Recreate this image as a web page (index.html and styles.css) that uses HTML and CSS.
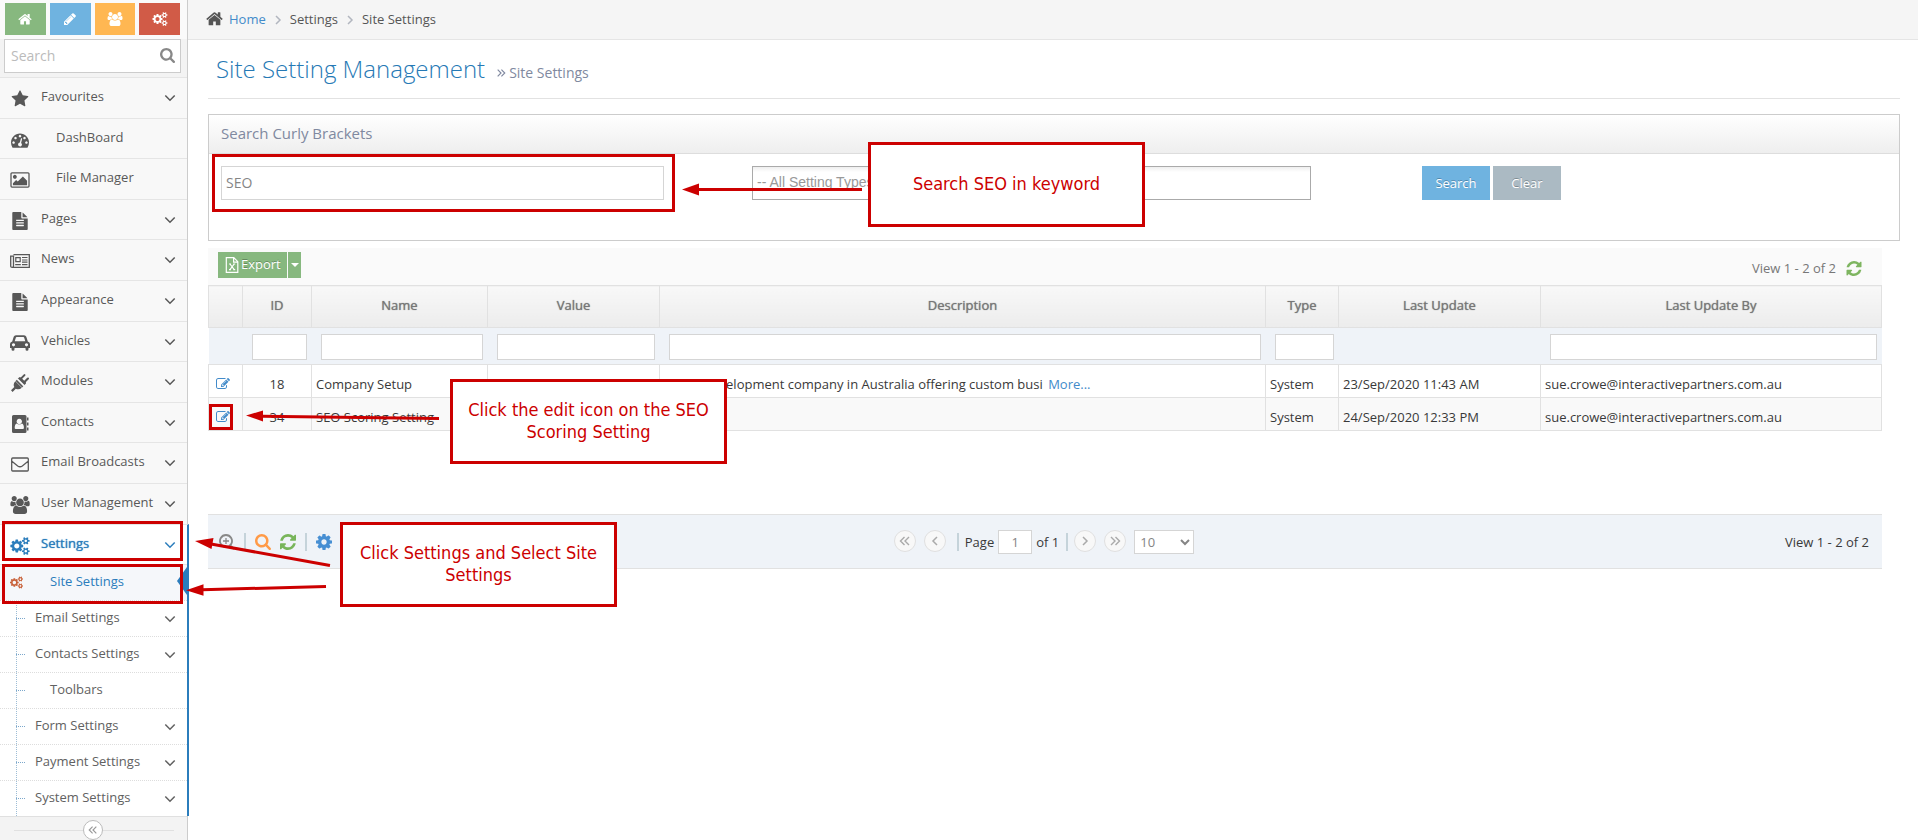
FILE: index.html
```html
<!DOCTYPE html>
<html lang="en">
<head>
    <meta charset="UTF-8">
    <meta name="viewport" content="width=device-width, initial-scale=1.0">
    <title>Site Setting Management</title>
    <link rel="stylesheet" href="styles.css">
</head>
<body>

    <!-- Icon set -->
    <svg class="sprite" aria-hidden="true">
        <symbol id="i-home" viewBox="64 128 1664 1472"><path d="M1472 992v480q0 26-19 45t-45 19h-384v-384h-256v384h-384q-26 0-45-19t-19-45v-480q0-1 .5-3t.5-3l575-474 575 474q1 2 1 6zm223-69l-62 74q-8 9-21 11h-3q-13 0-21-7l-692-577-692 577q-12 8-24 7-13-2-21-11l-62-74q-8-10-7-23.5t11-21.5l719-599q32-26 76-26t76 26l244 204v-195q0-14 9-23t23-9h192q14 0 23 9t9 23v408l219 182q10 8 11 21.5t-7 23.5z"/></symbol>
        <symbol id="i-pencil" viewBox="0 0 1792 1792"><path d="M491 1536l91-91-235-235-91 91v107h128v128h107zm523-928q0-22-22-22-10 0-17 7l-542 542q-7 7-7 17 0 22 22 22 10 0 17-7l542-542q7-7 7-17zm-54-192l416 416-832 832h-416v-416zm683 96q0 53-37 90l-166 166-416-416 166-165q36-38 90-38 53 0 91 38l235 234q37 39 37 91z"/></symbol>
        <symbol id="i-users" viewBox="64 0 1920 1792"><path d="M657 896q-162 5-265 128h-134q-82 0-138-40.5t-56-118.5q0-353 124-353 6 0 43.5 21t97.5 42.5 119 21.5q67 0 133-23-5 37-5 66 0 159 90 293zm1071 637q0 120-73 189.5t-194 69.5h-874q-121 0-194-69.5t-73-189.5q0-53 3.5-103.5t14-109 26.5-108.5 43-97.5 62-81 85.5-53.5 111.5-20q10 0 43 21.5t73 48 107 48 135 21.5 135-21.5 107-48 73-48 43-21.5q61 0 111.5 20t85.5 53.5 62 81 43 97.5 26.5 108.5 14 109 3.5 103.5zm-1024-1277q0 106-75 181t-181 75-181-75-75-181 75-181 181-75 181 75 75 181zm704 384q0 159-112.5 271.5t-271.5 112.5-271.5-112.5-112.5-271.5 112.5-271.5 271.5-112.5 271.5 112.5 112.5 271.5zm576 225q0 78-56 118.5t-138 40.5h-134q-103-123-265-128 90-134 90-293 0-29-5-66 66 23 133 23 59 0 119-21.5t97.5-42.5 43.5-21q124 0 124 353zm-128-609q0 106-75 181t-181 75-181-75-75-181 75-181 181-75 181 75 75 181z"/></symbol>
        <symbol id="i-cogs" viewBox="-64 0 1920 1792"><path d="M832 896q0-106-75-181t-181-75-181 75-75 181 75 181 181 75 181-75 75-181zm768 512q0-52-38-90t-90-38-90 38-38 90q0 53 37.5 90.5t90.5 37.5 90.5-37.5 37.5-90.5zm0-1024q0-52-38-90t-90-38-90 38-38 90q0 53 37.5 90.5t90.5 37.5 90.5-37.5 37.5-90.5zm-384 421v185q0 10-7 19.5t-16 10.5l-155 24q-11 35-32 76 34 48 90 115 7 11 7 20 0 12-7 19-23 30-82.5 89.5t-78.5 59.5q-11 0-21-7l-115-90q-37 19-77 31-11 108-23 155-7 24-30 24h-186q-11 0-20-7.5t-10-17.5l-23-153q-34-10-75-31l-118 89q-7 7-20 7-11 0-21-8-144-133-144-160 0-9 7-19 10-14 41-53t47-61q-23-44-35-82l-152-24q-10-1-17-9.5t-7-19.5v-185q0-10 7-19.5t16-10.5l155-24q11-35 32-76-34-48-90-115-7-11-7-20 0-12 7-20 22-30 82-89t79-59q11 0 21 7l115 90q34-18 77-32 11-108 23-154 7-24 30-24h186q11 0 20 7.5t10 17.5l23 153q34 10 75 31l118-89q8-7 20-7 11 0 21 8 144 133 144 160 0 8-7 19-12 16-42 54t-45 60q23 48 34 82l152 23q10 2 17 10.5t7 19.5zm640 533v140q0 16-149 31-12 27-30 52 51 113 51 138 0 4-4 7-122 71-124 71-8 0-46-47t-52-68q-20 2-30 2t-30-2q-14 21-52 68t-46 47q-2 0-124-71-4-3-4-7 0-25 51-138-18-25-30-52-149-15-149-31v-140q0-16 149-31 13-29 30-52-51-113-51-138 0-4 4-7 4-2 35-20t59-34 30-16q8 0 46 46.5t52 67.5q20-2 30-2t30 2q51-71 92-112l6-2q4 0 124 70 4 3 4 7 0 25-51 138 17 23 30 52 149 15 149 31zm0-1024v140q0 16-149 31-12 27-30 52 51 113 51 138 0 4-4 7-122 71-124 71-8 0-46-47t-52-68q-20 2-30 2t-30-2q-14 21-52 68t-46 47q-2 0-124-71-4-3-4-7 0-25 51-138-18-25-30-52-149-15-149-31v-140q0-16 149-31 13-29 30-52-51-113-51-138 0-4 4-7 4-2 35-20t59-34 30-16q8 0 46 46.5t52 67.5q20-2 30-2t30 2q51-71 92-112l6-2q4 0 124 70 4 3 4 7 0 25-51 138 17 23 30 52 149 15 149 31z"/></symbol>
        <symbol id="i-search" viewBox="64 128 1664 1664"><path d="M1216 832q0-185-131.5-316.5t-316.5-131.5-316.5 131.5-131.5 316.5 131.5 316.5 316.5 131.5 316.5-131.5 131.5-316.5zm512 832q0 52-38 90t-90 38q-54 0-90-38l-343-342q-179 124-399 124-143 0-273.5-55.5t-225-150-150-225-55.5-273.5 55.5-273.5 150-225 225-150 273.5-55.5 273.5 55.5 225 150 150 225 55.5 273.5q0 220-124 399l343 343q37 37 37 90z"/></symbol>
        <symbol id="i-star" viewBox="0 0 1792 1792"><path d="M1728 647q0 22-26 48l-363 354 86 500q1 7 1 20 0 21-10.5 35.5t-30.5 14.5q-19 0-40-12l-449-236-449 236q-22 12-40 12-21 0-31.5-14.5t-10.5-35.5q0-6 2-20l86-500-364-354q-25-27-25-48 0-37 56-46l502-73 225-455q19-41 49-41t49 41l225 455 502 73q56 9 56 46z"/></symbol>
        <symbol id="i-dashboard" viewBox="0 0 1792 1792"><path d="M384 1152q0-53-37.5-90.5t-90.5-37.5-90.5 37.5-37.5 90.5 37.5 90.5 90.5 37.5 90.5-37.5 37.5-90.5zm192-448q0-53-37.5-90.5t-90.5-37.5-90.5 37.5-37.5 90.5 37.5 90.5 90.5 37.5 90.5-37.5 37.5-90.5zm428 481l101-382q6-26-7.5-48.5t-38.5-29.5-48 6.5-30 39.5l-101 382q-60 5-107 43.5t-63 98.5q-20 77 20 146t117 89 146-20 89-117q16-60-6-117t-72-91zm660-33q0-53-37.5-90.5t-90.5-37.5-90.5 37.5-37.5 90.5 37.5 90.5 90.5 37.5 90.5-37.5 37.5-90.5zm-640-640q0-53-37.5-90.5t-90.5-37.5-90.5 37.5-37.5 90.5 37.5 90.5 90.5 37.5 90.5-37.5 37.5-90.5zm448 192q0-53-37.5-90.5t-90.5-37.5-90.5 37.5-37.5 90.5 37.5 90.5 90.5 37.5 90.5-37.5 37.5-90.5zm320 448q0 261-141 483-19 29-54 29h-1402q-35 0-54-29-141-221-141-483 0-182 71-348t191-286 286-191 348-71 348 71 286 191 191 286 71 348z"/></symbol>
        <symbol id="i-picture" viewBox="-64 0 1920 1792"><path d="M576 576q0 80-56 136t-136 56-136-56-56-136 56-136 136-56 136 56 56 136zm1024 384v448h-1408v-192l320-320 160 160 512-512zm96-704h-1600q-13 0-22.5 9.5t-9.5 22.5v1216q0 13 9.5 22.5t22.5 9.5h1600q13 0 22.5-9.5t9.5-22.5v-1216q0-13-9.5-22.5t-22.5-9.5zm160 32v1216q0 66-47 113t-113 47h-1600q-66 0-113-47t-47-113v-1216q0-66 47-113t113-47h1600q66 0 113 47t47 113z"/></symbol>
        <symbol id="i-file" viewBox="0 0 1792 1792"><path d="M1596 476q14 14 28 36h-472v-472q22 14 36 28zm-476 164h544v1056q0 40-28 68t-68 28h-1344q-40 0-68-28t-28-68v-1600q0-40 28-68t68-28h800v544q0 40 28 68t68 28zm160 736v-64q0-14-9-23t-23-9h-704q-14 0-23 9t-9 23v64q0 14 9 23t23 9h704q14 0 23-9t9-23zm0-256v-64q0-14-9-23t-23-9h-704q-14 0-23 9t-9 23v64q0 14 9 23t23 9h704q14 0 23-9t9-23zm0-256v-64q0-14-9-23t-23-9h-704q-14 0-23 9t-9 23v64q0 14 9 23t23 9h704q14 0 23-9t9-23z"/></symbol>
        <symbol id="i-news" viewBox="0 0 20 18"><path fill="none" stroke="currentColor" stroke-width="1.3" d="M3.5 2.7h15.8v12.6H2.2Q.7 15.3.7 14V4.2h2.8V14q0 1.2-1.2 1.3"/><path fill="none" stroke="currentColor" stroke-width="1.2" d="M5.8 5.6h4.4v4H5.8zM12 5.5h5.5M12 8h5.5M12 10.2h5.5M5.2 12.7h5.6M12 12.7h5.5"/></symbol>
        <symbol id="i-car" viewBox="0 0 20 18"><path fill-rule="evenodd" d="M2.2 7.4 3.7 2.8Q4.2 1.2 6 1.2h8q1.800 0 2.300 1.600l1.500 4.600Q20 8 20 10v4h-1.500v1.300q0 1.500-1.500 1.500t-1.500-1.500V14h-11v1.300q0 1.500-1.500 1.500t-1.500-1.500V14H0v-4Q0 8 2.200 7.400zM4.700 7.200h10.600l-1.200-3.700q-.1-.4-.6-.4h-7q-.5 0-.6.4zM3.500 9.200a1.600 1.600 0 1 0 .01 0zM16.500 9.200a1.600 1.600 0 1 0 .01 0z"/></symbol>
        <symbol id="i-plug" viewBox="0 0 18 18"><path d="M4.300 7.200 10.800 13.700Q8 16.300 4.800 14.700L1.600 17.900 0 16.300 3.300 13.100Q1.700 10 4.300 7.200zM5.800 5.800 12.200 12.200 14.500 9.900Q15.500 9 14.700 8.200L17.700 5.200Q18.300 4.300 17.700 3.800T16.200 3.800L13.200 6.800 11.200 4.800 14.200 1.800Q14.800 1 14.200.4T12.700.4L9.700 3.400Q8.800 2.700 8 3.500zM4.600 6.900 7 4.500l6.500 6.500-2.400 2.400z"/></symbol>
        <symbol id="i-contacts" viewBox="0 0 18 18"><path fill-rule="evenodd" d="M2.500 0h11.500q1.500 0 1.500 1.500v15q0 1.500-1.500 1.500h-11.500Q1 18 1 16.500v-15Q1 0 2.500 0zM8.300 3.800a2.700 2.700 0 1 0 .01 0zM5.700 8.500Q3.700 9 3.700 13q0 1 1 1h7.200q1 0 1-1 0-4-2-4.500-2.600 1.800-5.200 0z"/><path d="M16 2.500h1.500v3H16zM16 7.500h1.500v3H16zM16 12.500h1.500v3H16z"/></symbol>
        <symbol id="i-mail" viewBox="0 0 18 18"><path fill="none" stroke="currentColor" stroke-width="1.300" d="M1.700 3h14.600q1 0 1 1v11q0 1-1 1H1.700q-1 0-1-1V4q0-1 1-1zM.9 6.200l5.800 4.700q2.300 1.700 4.600 0l5.800-4.700"/></symbol>
        <symbol id="i-down" viewBox="0 0 12 12"><path fill="none" stroke="currentColor" stroke-width="1.500" d="M1.300 3.500 6 8.200l4.700-4.700"/></symbol>
        <symbol id="i-right" viewBox="0 0 12 12"><path fill="none" stroke="currentColor" stroke-width="1.500" d="M4 2l4 4-4 4"/></symbol>
        <symbol id="i-left" viewBox="0 0 12 12"><path fill="none" stroke="currentColor" stroke-width="1.500" d="M8 2 4 6l4 4"/></symbol>
        <symbol id="i-dright" viewBox="0 0 12 12"><path fill="none" stroke="currentColor" stroke-width="1.400" d="M2 2l4 4-4 4M6.500 2l4 4-4 4"/></symbol>
        <symbol id="i-dleft" viewBox="0 0 12 12"><path fill="none" stroke="currentColor" stroke-width="1.400" d="M10 2 6 6l4 4M5.500 2l-4 4 4 4"/></symbol>
        <symbol id="i-edit" viewBox="0 0 1792 1792"><path d="M888 1184l116-116-152-152-116 116v56h96v96h56zm440-720q-16-16-33 1l-350 350q-17 17-1 33t33-1l350-350q17-17 1-33zm80 594v190q0 119-84.5 203.5t-203.5 84.5h-832q-119 0-203.5-84.5t-84.5-203.5v-832q0-119 84.500-203.500t203.500-84.500h832q63 0 117 25 15 7 18 23 3 17-9 29l-49 49q-14 14-32 8-23-6-45-6h-832q-66 0-113 47t-47 113v832q0 66 47 113t113 47h832q66 0 113-47t47-113v-126q0-13 9-22l64-64q15-15 35-7t20 29zm-96-738l288 288-672 672h-288v-288zm444 132l-92 92-288-288 92-92q28-28 68-28t68 28l152 152q28 28 28 68t-28 68z"/></symbol>
        <symbol id="i-excel" viewBox="0 0 14 16"><path fill="none" stroke="currentColor" stroke-width="1.200" d="M1.300.7h7.500l4 4v10.600H1.300zM8.600.9v4.200h4.100M4 7h2M8.200 7h2M4 12.700h2M8.200 12.700h2M5 7l4.200 5.700M9.200 7 5 12.700"/></symbol>
        <symbol id="i-refresh" viewBox="128 128 1536 1536"><path d="M1639 1056q0 5-1 7-64 268-268 434.5t-478 166.5q-146 0-282.500-55t-243.500-157l-129 129q-19 19-45 19t-45-19-19-45v-448q0-26 19-45t45-19h448q26 0 45 19t19 45-19 45l-137 137q71 66 161 102t187 36q134 0 250-65t186-179q11-17 53-117 8-23 30-23h192q13 0 22.500 9.500t9.500 22.500zm25-800v448q0 26-19 45t-45 19h-448q-26 0-45-19t-19-45 19-45l138-138q-148-137-349-137-134 0-250 65t-186 179q-11 17-53 117-8 23-30 23h-199q-13 0-22.500-9.500t-9.500-22.500v-7q65-268 270-434.500t480-166.500q146 0 284 55.500t245 156.500l130-129q19-19 45-19t45 19 19 45z"/></symbol>
        <symbol id="i-cog" viewBox="128 128 1536 1536"><path d="M1152 896q0-106-75-181t-181-75-181 75-75 181 75 181 181 75 181-75 75-181zm512-109v222q0 12-8 23t-20 13l-185 28q-19 54-39 91 35 50 107 138 10 12 10 25t-9 23q-27 37-99 108t-94 71q-12 0-26-9l-138-108q-44 23-91 38-16 136-29 186-7 28-36 28h-222q-14 0-24.500-8.500t-11.500-21.500l-28-184q-49-16-90-37l-141 107q-10 9-25 9-14 0-25-11-126-114-165-168-7-10-7-23 0-12 8-23 15-21 51-66.500t54-70.500q-27-50-41-99l-183-27q-13-2-21-12.500t-8-23.500v-222q0-12 8-23t19-13l186-28q14-46 39-92-40-57-107-138-10-12-10-24 0-10 9-23 26-36 98.500-107.500t94.500-71.500q13 0 26 10l138 107q44-23 91-38 16-136 29-186 7-28 36-28h222q14 0 24.500 8.500t11.500 21.500l28 184q49 16 90 37l142-107q9-9 24-9 13 0 25 10 129 119 165 170 7 8 7 22 0 12-8 23-15 21-51 66.500t-54 70.500q26 50 41 98l183 28q13 2 21 12.500t8 23.500z"/></symbol>
        <symbol id="i-zoom" viewBox="0 0 16 16"><path fill="none" stroke="currentColor" stroke-width="1.800" d="M7 1a6 6 0 1 1-.01 0zM11.500 11.500 15 15"/><path fill="none" stroke="currentColor" stroke-width="1.300" d="M7 4v6M4 7h6"/></symbol>
    </svg>

    <aside class="sidebar">
        <div class="shortcuts">
            <button class="shortcut green" aria-label="Home"><svg class="icon"><use href="#i-home"/></svg></button>
            <button class="shortcut blue" aria-label="Edit"><svg class="icon"><use href="#i-pencil"/></svg></button>
            <button class="shortcut orange" aria-label="Users"><svg class="icon"><use href="#i-users"/></svg></button>
            <button class="shortcut red" aria-label="Settings"><svg class="icon"><use href="#i-cogs"/></svg></button>
        </div>
        <form class="nav-search">
            <input type="text" placeholder="Search" aria-label="Search menu">
            <svg class="search-icon"><use href="#i-search"/></svg>
        </form>

        <ul class="nav">
            <li><a href="#"><svg class="nav-icon"><use href="#i-star"/></svg><span>Favourites</span><svg class="arrow"><use href="#i-down"/></svg></a></li>
            <li><a href="#"><svg class="nav-icon"><use href="#i-dashboard"/></svg><span class="leaf">DashBoard</span></a></li>
            <li><a href="#"><svg class="nav-icon"><use href="#i-picture"/></svg><span class="leaf">File Manager</span></a></li>
            <li><a href="#"><svg class="nav-icon"><use href="#i-file"/></svg><span>Pages</span><svg class="arrow"><use href="#i-down"/></svg></a></li>
            <li><a href="#"><svg class="nav-icon"><use href="#i-news"/></svg><span>News</span><svg class="arrow"><use href="#i-down"/></svg></a></li>
            <li><a href="#"><svg class="nav-icon"><use href="#i-file"/></svg><span>Appearance</span><svg class="arrow"><use href="#i-down"/></svg></a></li>
            <li><a href="#"><svg class="nav-icon"><use href="#i-car"/></svg><span>Vehicles</span><svg class="arrow"><use href="#i-down"/></svg></a></li>
            <li><a href="#"><svg class="nav-icon"><use href="#i-plug"/></svg><span>Modules</span><svg class="arrow"><use href="#i-down"/></svg></a></li>
            <li><a href="#"><svg class="nav-icon"><use href="#i-contacts"/></svg><span>Contacts</span><svg class="arrow"><use href="#i-down"/></svg></a></li>
            <li><a href="#"><svg class="nav-icon"><use href="#i-mail"/></svg><span>Email Broadcasts</span><svg class="arrow"><use href="#i-down"/></svg></a></li>
            <li><a href="#"><svg class="nav-icon"><use href="#i-users"/></svg><span>User Management</span><svg class="arrow"><use href="#i-down"/></svg></a></li>
            <li class="open"><a href="#"><svg class="nav-icon"><use href="#i-cogs"/></svg><span>Settings</span><svg class="arrow"><use href="#i-down"/></svg></a>
                <ul class="submenu">
                    <li class="active"><a href="#"><svg class="sub-icon"><use href="#i-cogs"/></svg><span class="leaf">Site Settings</span></a></li>
                    <li><a href="#"><span>Email Settings</span><svg class="arrow"><use href="#i-down"/></svg></a></li>
                    <li><a href="#"><span>Contacts Settings</span><svg class="arrow"><use href="#i-down"/></svg></a></li>
                    <li><a href="#"><span class="leaf">Toolbars</span></a></li>
                    <li><a href="#"><span>Form Settings</span><svg class="arrow"><use href="#i-down"/></svg></a></li>
                    <li><a href="#"><span>Payment Settings</span><svg class="arrow"><use href="#i-down"/></svg></a></li>
                    <li><a href="#"><span>System Settings</span><svg class="arrow"><use href="#i-down"/></svg></a></li>
                </ul>
            </li>
        </ul>

        <div class="collapse">
            <button aria-label="Collapse menu"><svg><use href="#i-dleft"/></svg></button>
        </div>
    </aside>

    <main class="main">
        <nav class="breadcrumb">
            <svg class="home-icon"><use href="#i-home"/></svg>
            <a href="#">Home</a>
            <svg class="sep"><use href="#i-right"/></svg>
            <span>Settings</span>
            <svg class="sep"><use href="#i-right"/></svg>
            <span>Site Settings</span>
        </nav>

        <div class="content">
            <header class="page-header">
                <h1>Site Setting Management</h1>
                <small><svg><use href="#i-dright"/></svg>Site Settings</small>
            </header>

            <section class="panel">
                <h2>Search Curly Brackets</h2>
                <form class="filters">
                    <div><input type="text" value="SEO" aria-label="Keyword"></div>
                    <div><select aria-label="Setting type"><option>-- All Setting Types --</option></select></div>
                    <div class="filter-buttons">
                        <button type="button" class="btn-search">Search</button>
                        <button type="button" class="btn-clear">Clear</button>
                    </div>
                </form>
            </section>

            <section class="grid">
                <div class="grid-top">
                    <div class="export">
                        <button class="export-main"><svg><use href="#i-excel"/></svg>Export</button>
                        <button class="export-caret" aria-label="Export options"></button>
                    </div>
                    <div class="grid-view">View 1 - 2 of 2 <svg class="green-icon"><use href="#i-refresh"/></svg></div>
                </div>

                <table>
                    <colgroup>
                        <col class="c-edit"><col class="c-id"><col class="c-name"><col class="c-value"><col>
                        <col class="c-type"><col class="c-date"><col class="c-by">
                    </colgroup>
                    <thead>
                        <tr>
                            <th></th><th>ID</th><th>Name</th><th>Value</th><th>Description</th><th>Type</th><th>Last Update</th><th>Last Update By</th>
                        </tr>
                        <tr class="filter-row">
                            <td></td>
                            <td><input type="text" aria-label="Filter ID"></td>
                            <td><input type="text" aria-label="Filter name"></td>
                            <td><input type="text" aria-label="Filter value"></td>
                            <td><input type="text" aria-label="Filter description"></td>
                            <td><input type="text" aria-label="Filter type"></td>
                            <td></td>
                            <td><input type="text" aria-label="Filter last update by"></td>
                        </tr>
                    </thead>
                    <tbody>
                        <tr>
                            <td class="edit"><a href="#" aria-label="Edit 18"><svg><use href="#i-edit"/></svg></a></td>
                            <td class="id">18</td><td>Company Setup</td><td></td>
                            <td>A web development company in Australia offering custom busi <a class="more" href="#">More...</a></td>
                            <td>System</td><td>23/Sep/2020 11:43 AM</td><td>sue.crowe@interactivepartners.com.au</td>
                        </tr>
                        <tr>
                            <td class="edit"><a href="#" aria-label="Edit 34"><svg><use href="#i-edit"/></svg></a></td>
                            <td class="id">34</td><td>SEO Scoring Setting</td><td></td><td></td>
                            <td>System</td><td>24/Sep/2020 12:33 PM</td><td>sue.crowe@interactivepartners.com.au</td>
                        </tr>
                    </tbody>
                </table>

                <div class="grid-footer">
                    <div class="tools">
                        <button class="grey" aria-label="View"><svg><use href="#i-zoom"/></svg></button>
                        <i class="bar"></i>
                        <button class="amber" aria-label="Find"><svg><use href="#i-search"/></svg></button>
                        <button class="leafy" aria-label="Reload"><svg><use href="#i-refresh"/></svg></button>
                        <i class="bar"></i>
                        <button class="sky" aria-label="Columns"><svg><use href="#i-cog"/></svg></button>
                    </div>
                    <div class="pager">
                        <button aria-label="First page"><svg><use href="#i-dleft"/></svg></button>
                        <button aria-label="Previous page"><svg><use href="#i-left"/></svg></button>
                        <i class="bar"></i>
                        <label for="page">Page</label>
                        <input id="page" type="text" value="1">
                        <span>of 1</span>
                        <i class="bar"></i>
                        <button aria-label="Next page"><svg><use href="#i-right"/></svg></button>
                        <button aria-label="Last page"><svg><use href="#i-dright"/></svg></button>
                        <select aria-label="Rows per page"><option>10</option><option>20</option><option>30</option></select>
                    </div>
                    <div class="footer-view">View 1 - 2 of 2</div>
                </div>
            </section>
        </div>
    </main>

    <!-- Guide notes over the page -->
    <div class="guide">
        <svg class="arrows">
            <g>
                <path class="shaft" d="M862 189.500H698"/><path d="M682 189.500l17-6v12z"/>
                <path class="shaft" d="M439 418.500 262 416.200"/><path d="M246 415.500l17-5v11z"/>
                <path class="shaft" d="M330 565.500 211 544"/><path d="M195 541l18.500-3-2 11z"/>
                <path class="shaft" d="M326 586.500 202 589.800"/><path d="M186 590.300l17.500-6v11.500z"/>
            </g>
        </svg>
        <div class="mark mark-keyword"></div>
        <div class="mark mark-edit"></div>
        <div class="mark mark-settings"></div>
        <div class="mark mark-site"></div>
        <div class="note note-keyword">Search SEO in keyword</div>
        <div class="note note-edit">Click the edit icon on the SEO Scoring Setting</div>
        <div class="note note-settings">Click Settings and Select Site Settings</div>
    </div>

</body>
</html>
```
FILE: styles.css
```css
* { margin: 0; padding: 0; box-sizing: border-box; }

body {
    font-family: "Open Sans", sans-serif;
    font-size: 13px;
    line-height: 20px;
    color: #393939;
    background: #fff;
    min-height: 100vh;
    display: flex;
    position: relative;
}

a { color: #428bca; text-decoration: none; }
ul { list-style: none; }
button, input, select { font-family: inherit; font-size: 13px; border-radius: 0; }
button { border: none; cursor: pointer; }
svg { fill: currentColor; flex: none; }
.sprite { position: absolute; width: 0; height: 0; }

/* Sidebar */
.sidebar {
    width: 188px;
    flex: none;
    background: #f3f3f3;
    border-right: 1px solid #ccc;
}

.shortcuts {
    display: flex;
    gap: 4px;
    padding: 3px 7px 4px 5px;
    background: #fafafa;
}

.shortcut {
    flex: 1;
    height: 32px;
    color: #fff;
    display: flex;
    align-items: center;
    justify-content: center;
}

.shortcut .icon { width: 16px; height: 14px; }
.shortcut.green .icon { height: 12px; }
.green { background: #87b87f; }
.blue { background: #6fb3e0; }
.orange { background: #ffb752; }
.red { background: #d15b47; }

.nav-search {
    display: flex;
    align-items: center;
    margin: 0 6px 4px 4px;
    border: 1px solid #ccc;
    background: #fff;
    height: 34px;
    padding: 0 5px 2px 0;
}

.nav-search input {
    flex: 1;
    min-width: 0;
    border: none;
    padding: 0 6px;
    font-size: 14px;
    background: none;
}

.nav-search input::placeholder { color: #bbb; }
.search-icon { width: 15px; height: 15px; color: #888; }

.nav > li { border-top: 1px solid #e5e5e5; background: #f8f8f8; }

.nav > li > a {
    display: flex;
    align-items: center;
    height: 40px;
    padding: 0 10px;
    color: #585858;
}

.nav > li:nth-child(5n+2) > a, .nav > li:nth-child(5n+4) > a { height: 39px; }

.nav-icon { width: 20px; height: 18px; margin-right: 11px; margin-top: 2px; }
.nav span { flex: 1; padding-bottom: 4px; white-space: nowrap; }
.nav > li > a > .leaf { padding-left: 15px; }
.arrow { width: 12px; height: 12px; margin-right: 1px; }

.nav > .open { background: #fff; margin-right: -2px; border-right: 2px solid #2b7dbc; }
.nav > .open > a { color: #2b7dbc; text-shadow: 0 0 1px #2b7dbc; }

.submenu {
    border-top: 1px solid #e5e5e5;
    background: linear-gradient(#9dbdd6 50%, transparent 50%) 16px 0 / 1px 2px repeat-y;
    text-shadow: none;
}

.submenu li + li { border-top: 1px dotted #ddd; }

.submenu li a {
    display: flex;
    align-items: center;
    height: 35px;
    padding: 0 10px 0 16px;
    color: #616161;
}

.submenu li a::before {
    content: "";
    width: 9px;
    margin-right: 10px;
    border-top: 1px dotted #7ba7cb;
}

.submenu .leaf { padding-left: 15px; }

.submenu .active { position: relative; }
.submenu .active a { color: #2b7dbc; background: #f5f7fa; padding-left: 10px; }
.submenu .active a::before { display: none; }
.sub-icon { width: 13px; height: 13px; margin-right: 12px; color: #c86139; }

.submenu .active::after {
    content: "";
    position: absolute;
    right: 0;
    top: 2px;
    border: 14px solid transparent;
    border-width: 14px 10px;
    border-right-color: #2b7dbc;
    border-left: none;
}

.collapse {
    border-top: 1px solid #e0e0e0;
    padding: 3px 2px 3px 0;
    text-align: center;
    background: linear-gradient(#e0e0e0, #e0e0e0) center 13px / 160px 1px no-repeat;
}

.collapse button {
    width: 20px;
    height: 20px;
    border: 1px solid #bbb;
    border-radius: 50%;
    background: #fff;
    color: #999;
}

.collapse svg { width: 10px; height: 12px; display: block; margin: auto; }

/* Main area */
.main { flex: 1; min-width: 0; }

.breadcrumb {
    display: flex;
    align-items: center;
    height: 40px;
    padding: 0 18px 2px;
    background: #f5f5f5;
    border-bottom: 1px solid #e5e5e5;
    color: #555;
}

.home-icon { width: 17px; height: 15px; margin-right: 6px; }
.breadcrumb .sep { width: 14px; height: 12px; margin: 2px 5px 0; color: #b2b6bf; }

.content { padding: 0 18px 0 20px; }

.page-header {
    display: flex;
    align-items: baseline;
    gap: 11px;
    padding: 12px 8px 12px;
    border-bottom: 1px solid #e2e2e2;
}

.page-header h1 {
    font-size: 24px;
    line-height: 34px;
    font-weight: 300;
    color: #2679b5;
}

.page-header small { font-size: 14px; color: #8089a0; }
.page-header svg { width: 10px; height: 10px; margin-right: 3px; }

.panel { margin-top: 15px; border: 1px solid #ccc; }

.panel h2 {
    font-size: 15px;
    font-weight: 400;
    line-height: 36px;
    padding: 0 12px 2px;
    color: #8089a0;
    background: linear-gradient(#fff, #eee);
    border-bottom: 1px solid #ddd;
}

.filters {
    display: grid;
    grid-template-columns: 531fr 670fr 465fr;
    padding: 12px 12px 40px;
}

.filters input, .filters select {
    width: 83.4%;
    height: 34px;
    display: block;
    padding: 0 4px 2px;
    border: 1px solid #d5d5d5;
    font-size: 14px;
    color: #858585;
    background: #fff;
}

.filters select {
    appearance: none;
    border-color: #aaa;
    font-family: "Liberation Sans", Arial, sans-serif;
    color: #999;
    background: linear-gradient(#eee, #fff 5px);
}

.filter-buttons { display: flex; gap: 3px; }

.filter-buttons button {
    width: 68px;
    height: 34px;
    color: #fff;
    text-shadow: 0 -1px 0 rgba(0, 0, 0, 0.25);
}

.btn-search { background: #6fb3e0; }
.btn-clear { background: #abbac3; }

/* Data grid */
.grid { margin: 7px 18px 0 0; }

.grid-top {
    display: flex;
    justify-content: space-between;
    align-items: flex-start;
    height: 37px;
    padding: 4px 20px 0 10px;
    background: #fafafa;
}

.export { display: flex; gap: 1px; }

.export button {
    height: 26px;
    background: #87b87f;
    color: #fff;
    text-shadow: 0 -1px 0 rgba(0, 0, 0, 0.25);
}

.export-main { display: flex; align-items: center; gap: 2px; padding: 0 7px 2px; width: 69px; }
.export-main svg { width: 14px; height: 16px; margin-top: 2px; }
.export-caret { width: 13px; display: flex; align-items: center; justify-content: center; }

.export-caret::before {
    content: "";
    border: 4px solid transparent;
    border-top-color: #fff;
    border-bottom: none;
}

.grid-view { display: flex; align-items: center; gap: 10px; padding-top: 6px; color: #777; }
.grid-view svg { width: 16px; height: 15px; color: #69aa46; opacity: 0.85; }

table { width: 100%; table-layout: fixed; border-collapse: collapse; }
.c-edit { width: 34px; }
.c-id { width: 69px; }
.c-name { width: 176px; }
.c-value { width: 172px; }
.c-type { width: 73px; }
.c-date { width: 202px; }
.c-by { width: 341px; }

th, tbody td { border: 1px solid #e1e1e1; }

th {
    height: 42px;
    padding-bottom: 3px;
    font-weight: 400;
    color: #777;
    text-shadow: 0 0 1px #777;
    background: linear-gradient(#f8f8f8, #ececec);
}

.filter-row { background: #eff3f8; }
.filter-row td { height: 37px; padding: 2px 5px 1px 9px; }

.filter-row input {
    display: block;
    width: 100%;
    height: 26px;
    border: 1px solid #d5d5d5;
    background: #fff;
}

tbody td {
    height: 33px;
    padding: 5px 4px 0;
    white-space: nowrap;
    overflow: hidden;
}

tbody tr:nth-child(even) { background: #f9f9f9; }
.id { text-align: center; }
.edit a { display: block; padding-left: 3px; }
.edit svg { display: block; width: 14px; height: 14px; }
.more { padding-left: 2px; }

.grid-footer {
    display: grid;
    grid-template-columns: 1fr auto 1fr;
    align-items: center;
    height: 55px;
    margin-top: 83px;
    padding: 0 13px 0 11px;
    background: #eff3f8;
    border-top: 1px solid #e1e1e1;
    border-bottom: 1px solid #e1e1e1;
}

.bar { width: 2px; height: 18px; background: #c5d3da; }
.tools, .pager { display: flex; align-items: center; }
.tools { gap: 9px; }
.tools button { width: 16px; height: 16px; background: none; }
.tools svg { display: block; width: 16px; height: 16px; }
.grey { color: #888; }
.amber { color: #ff9a47; }
.leafy { color: #78b55a; }
.sky { color: #478fd3; }

.pager { gap: 4px; }
.pager .bar { margin: 0 2px 0 3px; }

.pager button {
    width: 22px;
    height: 22px;
    border: 1px solid #e0e0e0;
    border-radius: 50%;
    background: #f8f8f8;
    color: #aaa;
    margin: 0 4px 2px 0;
}

.pager svg { display: block; width: 12px; height: 12px; margin: auto; }

.pager input, .pager select {
    height: 24px;
    border: 1px solid #d5d5d5;
    background: #fff;
    color: #858585;
}

.pager input { width: 34px; text-align: center; }
.pager select { width: 60px; padding: 0 1px; }
.footer-view { text-align: right; }

/* Guide notes */
.guide { position: absolute; inset: 0; pointer-events: none; }
.arrows { width: 100%; height: 100%; position: absolute; color: #c00; }
.shaft { stroke: #c00; stroke-width: 3; fill: none; }

.mark { position: absolute; border: 3px solid #c00; }
.mark-keyword { left: 212px; top: 154px; width: 463px; height: 58px; }
.mark-edit { left: 209px; top: 404px; width: 24px; height: 26px; }
.mark-settings { left: 2px; top: 521px; width: 181px; height: 40px; }
.mark-site { left: 2px; top: 564px; width: 181px; height: 40px; }

.note {
    position: absolute;
    width: 277px;
    height: 85px;
    padding: 0 12px 2px;
    border: 3px solid #c00;
    background: #fff;
    color: #c00;
    font-family: "DejaVu Sans Condensed", "DejaVu Sans", sans-serif;
    font-size: 18px;
    line-height: 22px;
    display: flex;
    align-items: center;
    justify-content: center;
    text-align: center;
}

.note-keyword { left: 868px; top: 142px; }
.note-edit { left: 450px; top: 379px; }
.note-settings { left: 340px; top: 522px; }
```
